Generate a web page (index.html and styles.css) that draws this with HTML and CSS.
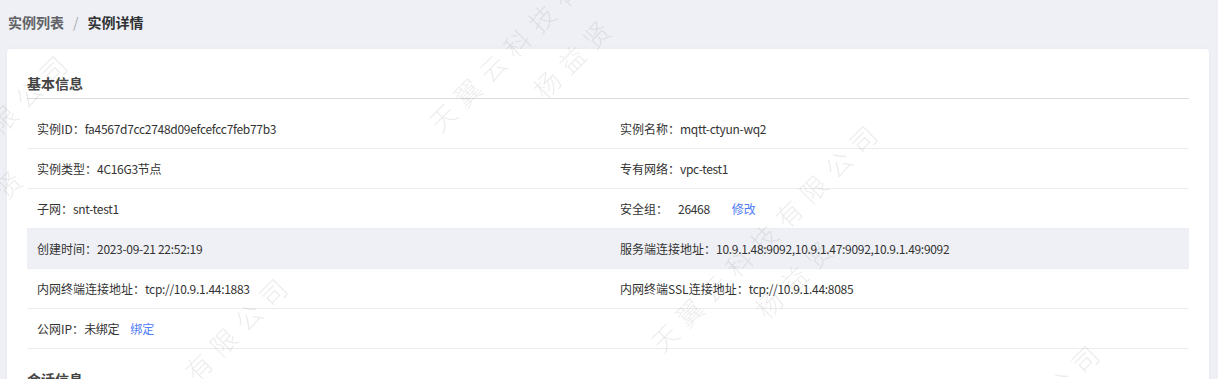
FILE: index.html
```html
<!DOCTYPE html>
<html lang="zh-CN">
  <head>
    <meta charset="UTF-8" />
    <meta name="viewport" content="width=device-width, initial-scale=1.0" />
    <title>实例详情</title>
    <link rel="stylesheet" href="styles.css">
  </head>
  <body>
    <div class="page">
      <div class="breadcrumb">
        <span class="crumb">实例列表</span>
        <span class="crumb-sep">/</span>
        <span class="crumb current">实例详情</span>
      </div>

      <div class="card">
        <div class="section">
          <h3 class="section-title">基本信息</h3>
          <div class="info-row">
            <div class="info-item"><span class="label">实例ID：</span><span class="value">fa4567d7cc2748d09efcefcc7feb77b3</span></div>
            <div class="info-item"><span class="label">实例名称：</span><span class="value">mqtt-ctyun-wq2</span></div>
          </div>
          <div class="info-row">
            <div class="info-item"><span class="label">实例类型：</span><span class="value">4C16G3节点</span></div>
            <div class="info-item"><span class="label">专有网络：</span><span class="value">vpc-test1</span></div>
          </div>
          <div class="info-row">
            <div class="info-item"><span class="label">子网：</span><span class="value">snt-test1</span></div>
            <div class="info-item"><span class="label">安全组：</span><span class="value spaced">26468</span><a href="#" class="link wide">修改</a></div>
          </div>
          <div class="info-row hover">
            <div class="info-item"><span class="label">创建时间：</span><span class="value">2023-09-21 22:52:19</span></div>
            <div class="info-item"><span class="label">服务端连接地址：</span><span class="value">10.9.1.48:9092,10.9.1.47:9092,10.9.1.49:9092</span></div>
          </div>
          <div class="info-row">
            <div class="info-item"><span class="label">内网终端连接地址：</span><span class="value">tcp://10.9.1.44:1883</span></div>
            <div class="info-item"><span class="label">内网终端SSL连接地址：</span><span class="value">tcp://10.9.1.44:8085</span></div>
          </div>
          <div class="info-row">
            <div class="info-item"><span class="label">公网IP：</span><span class="value">未绑定</span><a href="#" class="link">绑定</a></div>
            <div class="info-item"></div>
          </div>
        </div>

        <div class="section">
          <h3 class="section-title">会话信息</h3>
        </div>
      </div>
    </div>

    <!-- watermark layer -->
    <div class="watermark">
      <div class="wm-item" style="left: 424px; top: 117px;"><div>天翼云科技有限公司</div><div class="wm-name">杨益贤</div></div>
      <div class="wm-item" style="left: 646px; top: 337px;"><div>天翼云科技有限公司</div><div class="wm-name">杨益贤</div></div>
      <div class="wm-item" style="left: 868px; top: 557px;"><div>天翼云科技有限公司</div><div class="wm-name">杨益贤</div></div>
      <div class="wm-item" style="left: -164px; top: 267px;"><div>天翼云科技有限公司</div><div class="wm-name">杨益贤</div></div>
      <div class="wm-item" style="left: 56px; top: 490px;"><div>天翼云科技有限公司</div><div class="wm-name">杨益贤</div></div>
    </div>
  </body>
</html>
```

FILE: styles.css
```css
* {
  margin: 0;
  padding: 0;
  box-sizing: border-box;
}

body {
  background: #eff0f5;
  color: #333;
  font-family: "Noto Sans CJK SC", "Noto Sans", sans-serif;
  font-size: 12px;
}

.page {
  padding: 12px 9px 0 7px;
}

.breadcrumb {
  display: flex;
  align-items: center;
  height: 20px;
  padding-left: 1px;
  font-size: 14px;
  font-weight: bold;
}

.crumb {
  color: #606266;
}

.crumb.current {
  color: #303133;
}

.crumb-sep {
  margin: 0 9px;
  color: #a8abb2;
  font-weight: normal;
}

.card {
  margin-top: 17px;
  background: #fff;
  border-radius: 4px;
  padding: 24px 20px 20px;
  box-shadow: 0 0 6px rgba(0, 0, 0, 0.03);
}

.section + .section {
  margin-top: 20px;
}

.section-title {
  font-size: 14px;
  line-height: 20px;
  font-weight: bold;
  color: #444;
  padding-bottom: 5px;
  border-bottom: 1px solid #dcdcdc;
  margin-bottom: 10px;
}

.info-row {
  display: grid;
  grid-template-columns: 1fr 1fr;
  column-gap: 24px;
  height: 40px;
  padding: 0 10px;
  border-bottom: 1px solid #ebedf2;
}

.info-row.hover {
  background: #eff0f5;
}

.info-item {
  display: flex;
  align-items: center;
  white-space: nowrap;
}

.label,
.value {
  color: #333;
}

.value {
  letter-spacing: -0.3px;
}

.value.spaced {
  margin-left: 10px;
}

.link {
  color: #4f7cf6;
  text-decoration: none;
  margin-left: 11px;
}

.link.wide {
  margin-left: 22px;
}

.watermark {
  position: fixed;
  top: 0;
  left: 0;
  width: 100%;
  height: 100%;
  overflow: hidden;
  pointer-events: none;
  z-index: 99;
}

.wm-item {
  position: absolute;
  transform: rotate(-45deg);
  transform-origin: 0 0;
  font-size: 26px;
  line-height: 26px;
  letter-spacing: 9px;
  font-weight: 300;
  color: rgba(0, 0, 0, 0.08);
  white-space: nowrap;
}

.wm-name {
  margin-top: 24px;
  padding-left: 97px;
}
```
